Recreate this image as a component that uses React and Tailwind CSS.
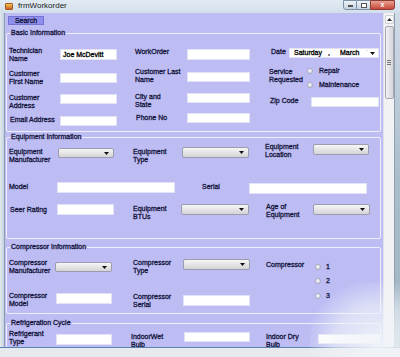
import React from 'react'

// small helpers for the old winforms look
const INK = ' text-[#14143a] [-webkit-text-stroke:0.3px_#14143a] '

function Lbl({ c = '', children }) {
  return (
    <div className={'shrink-0 whitespace-pre text-[7px] leading-[8px]' + INK + c}>
      {children}
    </div>
  )
}

function Txt({ c = '', children }) {
  return (
    <div className={'shrink-0 bg-white border border-[#e2e2f6] pl-[2px] text-[7px] leading-[9px] text-black [-webkit-text-stroke:0.3px_#000] ' + c}>
      {children}
    </div>
  )
}

function Sel({ c = '' }) {
  return (
    <div className={'shrink-0 flex items-center justify-end pr-[4px] rounded-[2px] border border-[#9c9cae] bg-linear-to-b from-[#f6f6f6] to-[#d4d4d8] ' + c}>
      <svg width="5" height="3" viewBox="0 0 5 3">
        <path d="M0 0h5L2.5 3z" fill="#111" />
      </svg>
    </div>
  )
}

function Radio({ label, c = '', gap = 'ml-[6px]' }) {
  return (
    <div className={'flex items-center ' + c}>
      <div className="w-[6px] h-[6px] rounded-full border border-[#a6aabb] bg-linear-to-br from-white to-[#d8d8e2]" />
      <span className={'text-[7px] leading-[8px]' + INK + gap}>{label}</span>
    </div>
  )
}

function Group({ title, c = '', children }) {
  return (
    <fieldset className={'ml-[1px] w-[375px] shrink-0 border border-[#eeeefe] rounded-[2px] ' + c}>
      <legend className={'ml-[3px] px-[1px] text-[7px] leading-[10px]' + INK}>{title}</legend>
      {children}
    </fieldset>
  )
}

export default function App() {
  return (
    <div className="w-[400px] h-[357px] overflow-hidden relative bg-[#d2dde8] font-['Liberation_Sans',Arial,sans-serif]">
      {/* title bar */}
      <div className="h-[13px] flex items-start bg-linear-to-b from-[#e2ebf3] to-[#d3dfea]">
        <div className="ml-[5px] mt-[3px] w-[8px] h-[7px] rounded-[1px] bg-linear-to-b from-[#f3c54a] to-[#c8602e] border border-[#a05a20]" />
        <div className="ml-[5px] text-[8px] leading-[12px] text-[#222]">frmWorkorder</div>
        <div className="flex-1" />
        <div className="flex mr-[5px]">
          <div className="w-[14px] h-[10px] rounded-bl-[3px] border border-[#7d8fa6] bg-linear-to-b from-[#eef3f8] to-[#c6d3e0] flex items-end justify-center pb-[2px]">
            <div className="w-[5px] h-[2px] bg-white border border-[#555]" />
          </div>
          <div className="w-[13px] h-[10px] border-y border-[#7d8fa6] bg-linear-to-b from-[#eef3f8] to-[#c6d3e0] flex items-center justify-center">
            <div className="w-[6px] h-[5px] border border-[#555] bg-white" />
          </div>
          <div className="w-[25px] h-[10px] rounded-br-[3px] border border-[#8a3b34] bg-linear-to-b from-[#e9a092] to-[#c7463a] flex items-center justify-center text-[7px] leading-[8px] font-bold text-white">
            x
          </div>
        </div>
      </div>

      <div className="flex h-[334px]">
        {/* left frame */}
        <div className="w-[5px] bg-linear-to-r from-[#e2e9f0] to-[#c6d2de] border-r border-[#8c9cb0]" />

        {/* client */}
        <div className="w-[378px] bg-[#bdbdf4] overflow-hidden flex flex-col">
          <div className={'ml-[3px] mt-[3px] w-[36px] h-[9px] shrink-0 bg-[#8e8eec] border border-[#7474d0] flex items-center justify-center text-[7px] leading-[8px]' + INK}>
            Search
          </div>

          <Group title="Basic Information" c="mt-[3px]">
            {/* row A */}
            <div className="flex items-start h-[20px] mt-[9px]">
              <Lbl c="ml-[2px] w-[51px]">{'Technician\nName'}</Lbl>
              <Txt c="w-[57px] h-[11px] mt-[2px]">Joe McDevitt</Txt>
              <Lbl c="ml-[18px] w-[52px] mt-[1px]">WorkOrder</Lbl>
              <Txt c="w-[63px] h-[11px] mt-[2px]" />
              <Lbl c="ml-[21px] w-[18px] mt-[1px]">Date</Lbl>
              <div className="shrink-0 w-[90px] h-[10px] mt-[1px] bg-white border border-[#e2e2f6] flex items-center text-[7px] leading-[8px] text-black [-webkit-text-stroke:0.3px_#000]">
                <span className="ml-[4px]">Saturday</span>
                <span className="ml-[6px]">,</span>
                <span className="ml-[10px]">March</span>
                <span className="flex-1" />
                <span className="text-[#999] mr-[2px] [-webkit-text-stroke:0]">`</span>
                <svg className="mr-[3px]" width="5" height="3" viewBox="0 0 5 3">
                  <path d="M0 0h5L2.5 3z" fill="#111" />
                </svg>
              </div>
            </div>
            {/* row B */}
            <div className="flex items-start h-[26px]">
              <Lbl c="ml-[2px] w-[51px] mt-[3px]">{'Customer\nFirst Name'}</Lbl>
              <Txt c="w-[57px] h-[10px] mt-[6px]" />
              <Lbl c="ml-[18px] w-[52px] mt-[1px]">{'Customer Last\nName'}</Lbl>
              <Txt c="w-[63px] h-[10px] mt-[5px]" />
              <Lbl c="ml-[19px] w-[38px] mt-[1px]">{'Service\nRequested'}</Lbl>
              <div className="flex flex-col">
                <Radio label="Repair" />
                <Radio label="Maintenance" c="mt-[6px]" />
              </div>
            </div>
            {/* row C */}
            <div className="flex items-start h-[20px]">
              <Lbl c="ml-[2px] w-[51px] mt-[1px]">{'Customer\nAddress'}</Lbl>
              <Txt c="w-[57px] h-[10px] mt-[1px]" />
              <Lbl c="ml-[18px] w-[52px]">{'City and\nState'}</Lbl>
              <Txt c="w-[63px] h-[10px]" />
              <Lbl c="ml-[20px] w-[41px] mt-[4px]">Zip Code</Lbl>
              <Txt c="w-[68px] h-[10px] mt-[4px]" />
            </div>
            {/* row D */}
            <div className="flex items-start h-[18px]">
              <Lbl c="ml-[3px] w-[50px] mt-[3px]">Email Address</Lbl>
              <Txt c="w-[57px] h-[10px] mt-[3px]" />
              <Lbl c="ml-[19px] w-[51px] mt-[1px]">Phone No</Lbl>
              <Txt c="w-[63px] h-[10px]" />
            </div>
          </Group>

          <Group title="Equipment Information">
            <div className="flex items-start h-[39px] mt-[1px]">
              <Lbl c="ml-[2px] w-[49px] mt-[5px]">{'Equipment\nManufacturer'}</Lbl>
              <Sel c="w-[56px] h-[10px] mt-[5px]" />
              <Lbl c="ml-[19px] w-[49px] mt-[5px]">{'Equipment\nType'}</Lbl>
              <Sel c="w-[67px] h-[11px] mt-[4px]" />
              <Lbl c="ml-[16px] w-[48px]">{'Equipment\nLocation'}</Lbl>
              <Sel c="w-[56px] h-[11px] mt-[1px]" />
            </div>
            <div className="flex items-start h-[21px]">
              <Lbl c="ml-[2px] w-[48px] mt-[1px]">Model</Lbl>
              <Txt c="w-[118px] h-[11px]" />
              <Lbl c="ml-[27px] w-[47px] mt-[1px]">Serial</Lbl>
              <Txt c="w-[118px] h-[11px] mt-[1px]" />
            </div>
            <div className="flex items-start h-[35px]">
              <Lbl c="ml-[3px] w-[47px] mt-[3px]">Seer Rating</Lbl>
              <Txt c="w-[57px] h-[11px] mt-[1px]" />
              <Lbl c="ml-[19px] w-[48px] mt-[2px]">{'Equipment\nBTUs'}</Lbl>
              <Sel c="w-[68px] h-[11px] mt-[1px]" />
              <Lbl c="ml-[17px] w-[47px]">{'Age of\nEquipment'}</Lbl>
              <Sel c="w-[57px] h-[11px] mt-[1px]" />
            </div>
          </Group>

          <Group title="Compressor Information" c="mt-[3px]">
            <div className="flex items-start h-[33px] mt-[7px]">
              <Lbl c="ml-[2px] w-[46px]">{'Compressor\nManufacturer'}</Lbl>
              <Sel c="w-[57px] h-[10px] mt-[3px]" />
              <Lbl c="ml-[21px] w-[50px]">{'Compressor\nType'}</Lbl>
              <Sel c="w-[67px] h-[11px]" />
              <Lbl c="ml-[16px] w-[49px] mt-[2px]">Compressor</Lbl>
              <div className="flex flex-col mt-[4px]">
                <Radio label="1" gap="ml-[5px]" />
                <Radio label="2" gap="ml-[5px]" c="mt-[6px]" />
                <Radio label="3" gap="ml-[5px]" c="mt-[7px]" />
              </div>
            </div>
            <div className="flex items-start h-[21px]">
              <Lbl c="ml-[2px] w-[47px]">{'Compressor\nModel'}</Lbl>
              <Txt c="w-[56px] h-[11px] mt-[1px]" />
              <Lbl c="ml-[21px] w-[50px] mt-[1px]">{'Compressor\nSerial'}</Lbl>
              <Txt c="w-[67px] h-[11px] mt-[3px]" />
            </div>
          </Group>

          <Group title="Refrigeration Cycle" c="mt-[4px]">
            <div className="flex items-start h-[30px] mt-[2px]">
              <Lbl c="ml-[2px] w-[47px]">{'Refrigerant\nType'}</Lbl>
              <Txt c="w-[56px] h-[11px] mt-[4px]" />
              <Lbl c="ml-[19px] w-[53px] mt-[3px]">{'IndoorWet\nBulb'}</Lbl>
              <Txt c="w-[66px] h-[10px] mt-[2px]" />
              <Lbl c="ml-[16px] w-[52px] mt-[3px]">{'Indoor Dry\nBulb'}</Lbl>
              <Txt c="w-[62px] h-[10px] mt-[4px]" />
            </div>
          </Group>
        </div>

        {/* scrollbar */}
        <div className="w-[11px] bg-[#f2f2f4] flex flex-col items-center border-l border-[#e0e0ea]">
          <div className="mt-[2px] w-[9px] h-[9px] flex items-center justify-center rounded-[1px] border border-[#d0d0d8] bg-[#f8f8f8]">
            <svg width="5" height="3" viewBox="0 0 5 3">
              <path d="M0 3h5L2.5 0z" fill="#333" />
            </svg>
          </div>
          <div className="mt-[2px] w-[9px] h-[73px] rounded-[2px] border border-[#a8a8b4] bg-linear-to-r from-[#f2f2f4] to-[#d4d4da] flex flex-col items-center justify-center gap-[1px]">
            <div className="w-[4px] h-[1px] bg-[#777]" />
            <div className="w-[4px] h-[1px] bg-[#777]" />
            <div className="w-[4px] h-[1px] bg-[#777]" />
          </div>
        </div>

        {/* right frame */}
        <div className="flex-1 bg-linear-to-b from-[#d0dbe6] via-[#aabdcb] to-[#9fb3c2] border-l border-[#8ea0b4]" />
      </div>

      <div className="h-[1px] bg-[#5b82b0]" />
      <div className="h-[9px] bg-[#e6eaef]" />

      {/* washed-out glare in the corner */}
      <div className="absolute right-0 bottom-0 w-[90px] h-[75px] bg-[radial-gradient(ellipse_at_75%_85%,rgba(240,244,248,0.95),rgba(240,244,248,0.6)_45%,rgba(240,244,248,0)_75%)]" />
    </div>
  )
}
